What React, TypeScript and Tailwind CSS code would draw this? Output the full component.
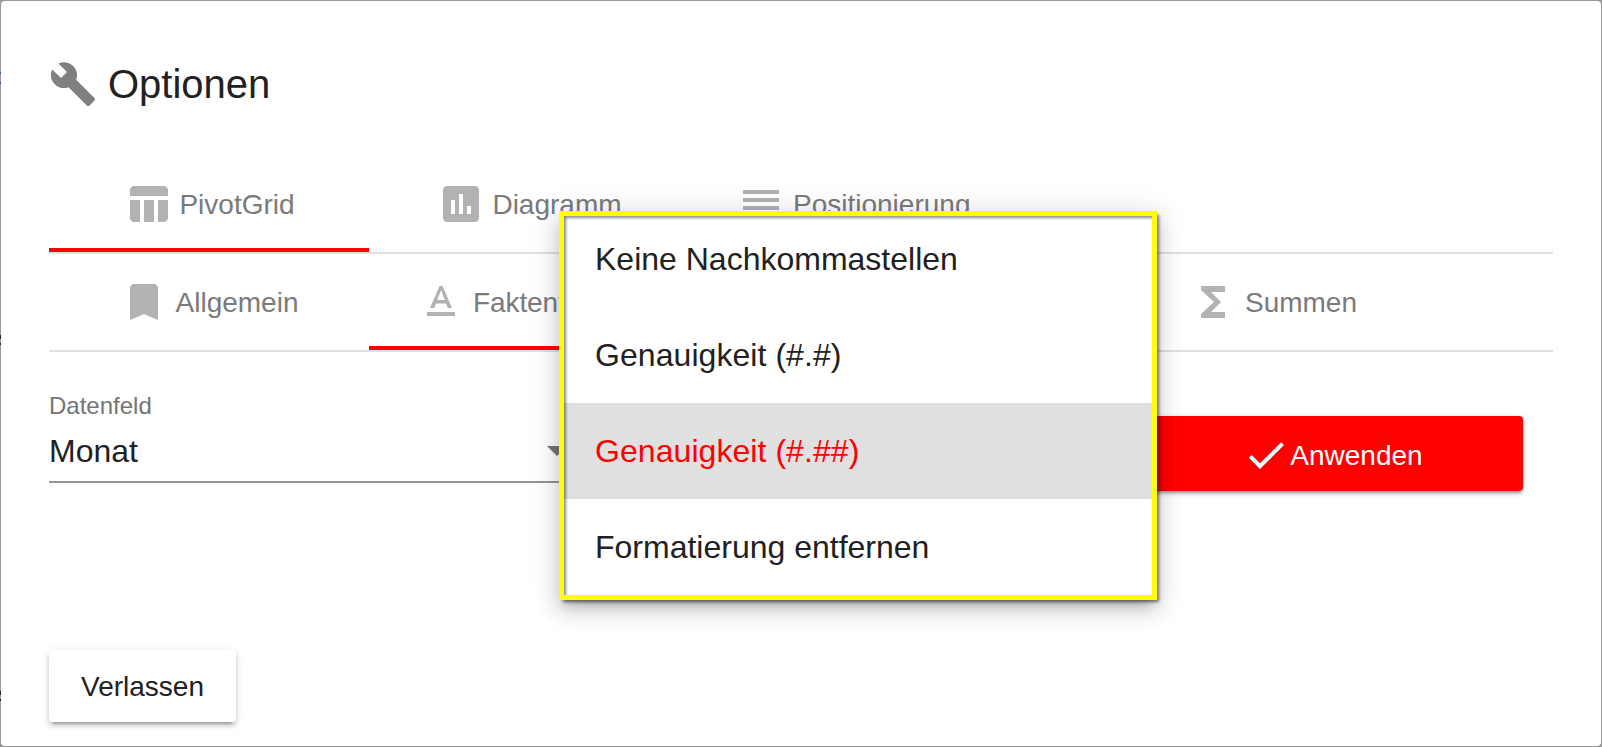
import React from "react";

const icons = {
  build:
    "M22.7 19l-9.1-9.1c.9-2.3.4-5-1.5-6.9-2-2-5-2.4-7.4-1.3L9 6 6 9 1.6 4.7C.4 7.1.9 10.1 2.9 12.1c1.9 1.9 4.6 2.4 6.9 1.5l9.1 9.1c.4.4 1 .4 1.4 0l2.3-2.3c.5-.4.5-1.1.1-1.4z",
  table:
    "M10 10.02h5V21h-5zM17 21h3c1.1 0 2-.9 2-2v-9h-5v11zm3-18H5c-1.1 0-2 .9-2 2v3h19V5c0-1.1-.9-2-2-2zM3 19c0 1.1.9 2 2 2h3V10H3v9z",
  chart:
    "M19 3H5c-1.1 0-2 .9-2 2v14c0 1.1.9 2 2 2h14c1.1 0 2-.9 2-2V5c0-1.1-.9-2-2-2zM9 17H7v-7h2v7zm4 0h-2V7h2v10zm4 0h-2v-4h2v4z",
  reorder: "M3 15h18v-2H3v2zm0 4h18v-2H3v2zm0-8h18V9H3v2zm0-6v2h18V5H3z",
  bookmark: "M17 3H7c-1.1 0-1.99.9-1.99 2L5 21l7-3 7 3V5c0-1.1-.9-2-2-2z",
  textFormat:
    "M5 17v2h14v-2H5zm4.5-4.2h5l.9 2.2h2.1L12.75 4h-1.5L6.5 15h2.1l.9-2.2zM12 5.98L13.87 11h-3.74L12 5.98z",
  sum: "M18 4H6v2l6.5 6L6 18v2h12v-3h-7l5-5-5-5h7z",
  check: "M9 16.17L4.83 12l-1.42 1.41L9 19 21 7l-1.41-1.41z",
  arrow: "M7 10l5 5 5-5z",
};

function Icon({ name, className = "" }: { name: keyof typeof icons; className?: string }) {
  return (
    <svg viewBox="0 0 24 24" className={`size-12 shrink-0 fill-current ${className}`}>
      <path d={icons[name]} />
    </svg>
  );
}

function Tab({
  icon,
  label,
  active = false,
  className = "w-80 justify-center gap-2",
}: {
  icon: keyof typeof icons;
  label: string;
  active?: boolean;
  className?: string;
}) {
  return (
    <div
      className={`flex h-24 shrink-0 items-center border-b-4 pt-1 text-[28px] whitespace-nowrap text-[#7a7a7a] ${
        active ? "border-[#ff0000]" : "border-transparent"
      } ${className}`}
    >
      <Icon name={icon} className="text-[#b2b2b2]" />
      <span className="translate-y-px">{label}</span>
    </div>
  );
}

const options = [
  "Keine Nachkommastellen",
  "Genauigkeit (#.#)",
  "Genauigkeit (#.##)",
  "Formatierung entfernen",
];

function FormatMenu() {
  return (
    <div className="absolute top-[211px] left-[559px] h-[389px] w-[598px] bg-white shadow-[0_10px_10px_-6px_rgba(0,0,0,0.2),0_10px_20px_2px_rgba(0,0,0,0.14),0_2px_28px_4px_rgba(0,0,0,0.08)]">
      <ul className="text-[32px] text-[#212121]">
        {options.map((option, i) => (
          <li
            key={option}
            className={`flex h-24 items-center pr-8 pl-9 ${i === 2 ? "bg-[#e0e0e0] text-[#ff0000]" : ""} ${
              option.startsWith("Genauigkeit") ? "tracking-[0.06px]" : ""
            }`}
          >
            {option}
          </li>
        ))}
      </ul>
      <div className="absolute inset-0 border-5 border-[#ffff00] shadow-[3px_3px_3px_-1px_rgba(0,0,0,0.5),inset_2px_2px_3px_rgba(0,0,0,0.45)]" />
    </div>
  );
}

export default function App() {
  return (
    <div className="relative h-[747px] w-[1602px] overflow-hidden bg-[#999999] p-px font-['Liberation_Sans',Arial,sans-serif] leading-none text-[#212121]">
      <div className="flex h-[745px] flex-col rounded bg-white px-12">
        <header className="mt-[59px] flex h-12 items-center gap-[11px] text-[40px]">
          <Icon name="build" className="text-[#808080]" />
          <h1>Optionen</h1>
        </header>

        <nav className="mt-12 flex w-[1504px] border-b-2 border-[#e0e0e0]">
          <Tab icon="table" label="PivotGrid" active className="w-80 justify-center gap-[7px] pl-px" />
          <Tab icon="chart" label="Diagramm" className="w-80 justify-center gap-[7px] pl-px" />
          <Tab icon="reorder" label="Positionierung" className="gap-2 px-12" />
        </nav>
        <nav className="flex w-[1504px] border-b-2 border-[#e0e0e0]">
          <Tab icon="bookmark" label="Allgemein" />
          <Tab
            icon="textFormat"
            label="Faktenformatierung"
            active
            className="w-[372px] gap-2 px-12 tracking-[-0.1px]"
          />
          <Tab icon="textFormat" label="Formatierung" className="w-[372px] justify-center gap-2" />
          <Tab icon="sum" label="Summen" />
        </nav>

        <section className="mt-[42px] flex h-24 items-start justify-between">
          <div className="w-[532px]">
            <div className="text-2xl leading-6 text-[#757575]">Datenfeld</div>
            <div className="flex h-[65px] items-center justify-between border-b-2 border-[#949494] text-[32px]">
              <span className="translate-y-px">Monat</span>
              <Icon name="arrow" className="text-[#757575]" />
            </div>
          </div>
          <button className="mt-[22px] mr-[30px] flex h-[75px] w-[402px] items-center justify-center rounded bg-[#ff0000] pt-[3px] text-[28px] text-white shadow-[0_3px_3px_-1px_rgba(0,0,0,0.3),0_2px_6px_rgba(0,0,0,0.2)]">
            <Icon name="check" className="ml-[21px] text-[#e0ffff]" />
            <span className="translate-y-px">Anwenden</span>
          </button>
        </section>

        <footer className="mt-[160px]">
          <button className="flex h-[72px] w-[187px] items-center justify-center rounded bg-white pt-0.5 text-[28px] shadow-[0_6px_2px_-4px_rgba(0,0,0,0.2),0_4px_4px_rgba(0,0,0,0.14),0_2px_10px_rgba(0,0,0,0.12)]">
            Verlassen
          </button>
        </footer>
      </div>
      <div className="absolute top-0 left-0 flex w-px flex-col">
        <i className="mt-[72px] h-0.5 bg-[#2b579a]" />
        <i className="mt-2 h-0.5 bg-[#2b579a]" />
        <i className="mt-[251px] h-1 bg-[#222222]" />
        <i className="mt-1 h-0.5 bg-[#222222]" />
        <i className="mt-[346px] h-1 bg-[#222222]" />
        <i className="mt-1 h-0.5 bg-[#222222]" />
      </div>
      <FormatMenu />
    </div>
  );
}
